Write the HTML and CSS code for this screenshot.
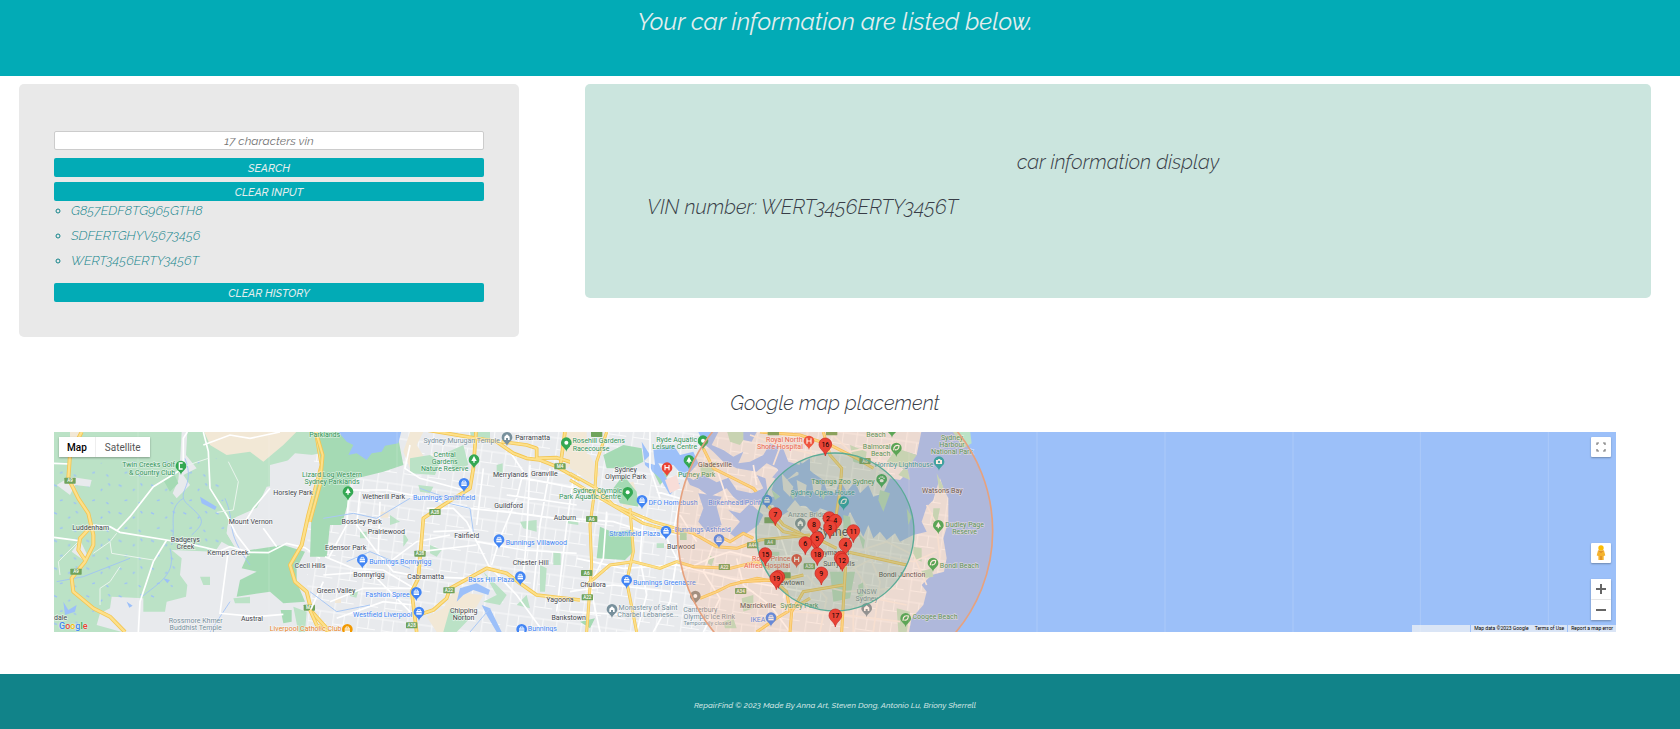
FILE: index.html
```html
<!DOCTYPE html>
<html lang="en">
<head>
<meta charset="utf-8">
<title>RepairFind</title>
<link rel="stylesheet" href="styles.css">
</head>
<body>
<header class="hero"><h1 class="hero-title">Your car information are listed below.</h1></header>
<main>
<div class="panels">
  <section class="search-panel">
    <form class="search-form">
      <input class="vin-input" type="text" aria-label="VIN" placeholder="17 characters vin">
      <button class="btn" type="button">SEARCH</button>
      <button class="btn" type="reset">CLEAR INPUT</button>
    </form>
    <ul class="history">
      <li>G857EDF8TG965GTH8</li>
      <li>SDFERTGHYV5673456</li>
      <li>WERT3456ERTY3456T</li>
    </ul>
    <button class="btn" type="button">CLEAR HISTORY</button>
  </section>
  <section class="car-panel">
    <h2 class="heading">car information display</h2>
    <p class="vin">VIN number: WERT3456ERTY3456T</p>
  </section>
</div>
<section class="map-section">
  <h2 class="heading">Google map placement</h2>
  <div class="map">
    <svg class="map-canvas" viewBox="0 0 4686 600" preserveAspectRatio="xMidYMid slice" role="img" aria-label="Map of Sydney">
      <defs>
        <g id="drop"><path fill="currentColor" d="M0 0C-2-13-16-14-16-27A16 16 0 0 1 16-27C16-14 2-13 0 0Z"/></g>
        <g id="dot"><use href="#drop"/><circle cy="-27" r="6" fill="#fff"/></g>
        <g id="bag"><use href="#drop"/><path d="M-8-30H8V-19H-8Z" fill="#fff"/><path d="M-4-30V-34H4V-30" fill="none" stroke="#fff" stroke-width="2.5"/><path d="M-8-25H8" stroke="currentColor" stroke-width="2"/></g>
        <g id="tree"><use href="#drop"/><path d="M0-38L8-23H2V-18H-2V-23H-8Z" fill="#fff"/></g>
        <g id="hosp"><use href="#drop"/><path d="M-6-35V-19M6-35V-19M-6-27H6" stroke="#fff" stroke-width="3.5"/></g>
        <g id="arch"><use href="#drop"/><path d="M-8-19V-29L0-36L8-29V-19H3V-25H-3V-19Z" fill="#fff"/></g>
        <g id="cam"><use href="#drop"/><path d="M-9-32H-4L-2-35H3L5-32H9V-20H-9Z" fill="#fff"/><circle cy="-26" r="3.5" fill="currentColor"/></g>
        <g id="leaf"><use href="#drop"/><path d="M-8-20C-8-34 0-36 8-34C8-24 2-20-4-22" fill="none" stroke="#fff" stroke-width="3.5"/></g>
        <g id="paw"><use href="#drop"/><ellipse cy="-23" rx="6" ry="5" fill="#fff"/><circle cx="-7" cy="-30" r="2.5" fill="#fff"/><circle cx="-2" cy="-34" r="2.5" fill="#fff"/><circle cx="3" cy="-34" r="2.5" fill="#fff"/><circle cx="7" cy="-30" r="2.5" fill="#fff"/></g>
        <g id="golf"><use href="#drop"/><path d="M5-36H-5V-18H5" fill="none" stroke="#fff" stroke-width="4"/></g>
        <g id="pin"><path d="M0 0C-2-15-19-20-19-35A19 19 0 0 1 19-35C19-20 2-15 0 0Z" fill="#ea4335" stroke="#c5221f" stroke-width="2"/></g>
        <g id="shield"><rect x="-17" y="-9" width="34" height="18" rx="2" fill="#6fa35c"/></g>
        <pattern id="ponds" width="97" height="83" patternUnits="userSpaceOnUse"><path d="M12 14l9 4M55 31l5-5M78 9l5 7M30 61l8-2M72 66l6 5" stroke="#9cc0f9" stroke-width="4"/></pattern>
        <pattern id="blocks" width="74" height="68" patternUnits="userSpaceOnUse" patternTransform="rotate(8)"><path d="M0 12H74M20 0V68M20 46H74M52 12V46" fill="none" stroke="#fff" stroke-width="3" opacity=".75"/></pattern>
      </defs>

      <rect width="4686" height="600" fill="#e8eaed"/>
      <rect x="760" width="2160" height="600" fill="url(#blocks)"/>

      <!-- western farmland -->
      <g transform="translate(-12 -21)">
        <path fill="#bbe2c6" d="M0 0H830V80L740 100L660 120V185L640 240L560 275L535 290L530 325L560 375L515 350L495 380L365 375L395 400L390 450L412 480L408 515L350 530L345 560L280 560V520L185 515L180 550L150 565L140 600L230 625H0Z"/>
        <path fill="url(#ponds)" d="M0 120L500 100L530 290L500 370H365L390 450L340 530L180 515L90 600H0Z"/>
        <path fill="#e8eaed" d="M735 85L790 90L800 200L770 290L745 310L750 350L700 360L610 380L560 375L530 325L535 290L620 250L650 185L690 180L700 120Z"/>
        <path fill="#f2e8d6" d="M60 15H100L95 30L60 50ZM460 15H745L700 60L640 110L600 80L530 90L480 60Z"/>
        <path fill="#e8eaed" d="M395 21H412L408 90L440 130L400 150L420 180L380 220L368 205L385 165L390 110ZM20 180L60 155L125 165L120 185L75 180L60 210ZM65 380L90 345L112 390L100 405Z"/>
        <path fill="#a5dab4" d="M600 375L700 360L765 380L740 430V470L765 530L700 535L660 500L560 515L570 465L620 440L575 430ZM340 165L370 140L385 175L360 200ZM692 555H725V590L700 595Z"/>
        <path fill="#bbe2c6" d="M730 545L770 560L765 621H745ZM450 455H480V480H460ZM550 520L600 515V535H555Z"/>
        <path fill="none" stroke="#9cc0f9" stroke-width="3" opacity=".8" d="M405 100C440 190 370 200 415 240S470 290 425 330M365 360C380 300 350 250 400 220M270 520C330 470 380 450 360 370M525 220C560 300 520 310 600 420M20 470L100 455L240 400M540 530L480 621"/>
        <path fill="#9cc0f9" d="M450 215L500 245L495 255L455 235ZM340 460l20 5-8 10zM40 530l15 25 25-15-5 20-30 10zM230 530l18 12-10 6z"/>
        <path fill="none" stroke="#fff" stroke-width="5" d="M12 337L85 347M125 300L180 305L210 322L350 345L440 362L510 378L540 365L600 382L655 383L710 355L765 368L810 400M200 318L240 275L310 185L400 130V40L412 21M460 21L475 80L480 190L530 270L560 330L600 382M350 345L310 410L270 530L265 621M535 375L510 565L620 575L700 568M640 310L680 365M12 115L60 117M460 60L540 30L600 40L690 21M660 190L610 250L580 300"/>
        <path fill="none" stroke="#eaf5ed" stroke-width="3" d="M400 125L475 100M535 110L565 170L550 255L500 262M130 385L180 350L200 325M180 350L185 385L310 405M210 425L180 470L150 490V540M90 345L25 410L30 450"/>
        <g fill="none" stroke-linejoin="round"><path stroke="#f3c653" stroke-width="12" d="M95 21L80 50L60 90L55 160L85 220L115 265L130 330V360L105 410L65 460L70 500L130 550L180 575L225 621M118 310L90 340L85 375L105 405M798 21L815 120L775 270L755 360L720 420L735 470L770 500L785 560L830 610"/><path stroke="#fde08a" stroke-width="7" d="M95 21L80 50L60 90L55 160L85 220L115 265L130 330V360L105 410L65 460L70 500L130 550L180 575L225 621M118 310L90 340L85 375L105 405M798 21L815 120L775 270L755 360L720 420L735 470L770 500L785 560L830 610"/></g>
        <use href="#shield" x="60" y="167"/><use href="#shield" x="78" y="440"/><use href="#shield" x="778" y="548"/>
        <g class="route"><text x="60" y="172">A9</text><text x="78" y="445">A9</text><text x="778" y="553">M7</text></g>
        <use href="#golf" x="393" y="150" color="#34a853"/>
      </g>

      <!-- western suburbs -->
      <g transform="translate(768 -21)">
        <path fill="#a5dab4" d="M15 15H260L280 120L220 140L120 165L115 230L95 300H60L50 395H0L5 250L35 120Z"/>
        <path fill="#f2e8d6" d="M300 21H340L320 60L345 100L300 130L280 80ZM350 575L400 550L430 500L520 510L500 545L440 590L430 621H380ZM755 21H830V90L770 130ZM210 260h25v18h-25zM75 520h18v14H75z"/>
        <path fill="#9cc0f9" d="M80 15H275L265 55L225 62L215 80L185 85L170 105L140 85L115 90L130 60L110 50ZM440 530L450 490L500 475L540 495L535 510L490 495L460 510ZM515 540L540 550L575 621H560L530 570Z"/>
        <path fill="#bbe2c6" d="M300 100L360 90L390 110L375 150L300 145ZM415 80L460 60L475 120L430 140ZM325 180L370 185L360 205L330 200ZM240 270L270 290L240 300ZM360 360L395 375L380 395L360 385ZM520 440L590 510L570 540L520 530L560 510ZM620 540L650 510L660 550ZM630 290L680 285V320L640 310ZM690 420L710 430L705 500L690 500ZM420 550L480 580L440 621H400ZM280 320l15 25-15 20zM730 380h22v40h-22zM560 120l18-5v35h-18zM770 270l35 10v20l-35-5zM480 21h60v20h-55zM150 320h20v20h-20zM120 490l25 8-6 20-19-5z"/>
        <g fill="none" stroke="#fff" stroke-width="5"><path d="M100 195L230 195L330 215L480 250L600 262L810 290M55 400L110 300L115 225M150 200L140 300L200 380L250 440L330 455L480 460L560 470M210 230L205 380M45 395L130 430L220 435L330 500M300 60L285 130L330 160L460 195M40 450L180 440L300 560M60 530L160 490L330 490M80 580L220 530L310 540M350 250L430 250L470 290L500 350L540 430M500 350L640 375L800 385M520 130L500 300M600 80L640 140L620 220L570 340L545 420M660 120L650 340L640 450M720 130L690 300L670 500M790 160L770 300L740 560M540 425L620 510L700 621M330 380L500 360M240 410L320 350L420 330M40 470L0 560M370 320L490 315M570 145L800 190M590 210L800 240"/></g>
        <path fill="none" stroke="#a9c8f5" stroke-width="3" d="M110 410L180 380L300 430M395 230L480 250L490 320M40 280L130 265L200 280L300 220M0 500L80 560L180 540M330 190L400 215M540 550L480 621"/>
        <g fill="none" stroke-linejoin="round"><path stroke="#f3c653" stroke-width="11" d="M18 21L38 90L30 180L0 290M320 621L305 500L325 460L340 280L400 240L480 190L490 130L498 21M325 570L370 555L410 520L420 490L530 430L590 445L630 475L680 510L810 525M350 15L560 50L610 85L650 100L690 105L740 125L810 165M575 50L650 60L680 70V100L740 98L810 120M765 21L750 130M0 555L20 600L60 621"/><path stroke="#fde08a" stroke-width="6" d="M18 21L38 90L30 180L0 290M320 621L305 500L325 460L340 280L400 240L480 190L490 130L498 21M325 570L370 555L410 520L420 490L530 430L590 445L630 475L680 510L810 525M350 15L560 50L610 85L650 100L690 105L740 125L810 165M575 50L650 60L680 70V100L740 98L810 120M765 21L750 130M0 555L20 600L60 621"/></g>
        <use href="#shield" x="375" y="261"/><use href="#shield" x="330" y="386"/><use href="#shield" x="417" y="496"/><use href="#shield" x="305" y="601"/><use href="#shield" x="750" y="124"/>
        <g class="route"><text x="375" y="266">A28</text><text x="330" y="391">A28</text><text x="417" y="501">A22</text><text x="305" y="606">A28</text><text x="750" y="129">M4</text></g>
        <use href="#arch" x="591" y="64" color="#78909c"/>
        <g color="#34a853"><use href="#tree" x="492" y="131"/><use href="#tree" x="114" y="227"/><use href="#dot" x="769" y="80"/></g>
        <g color="#4285f4"><use href="#bag" x="462" y="202"/><use href="#bag" x="567" y="371"/><use href="#bag" x="157" y="431"/><use href="#bag" x="631" y="482"/><use href="#bag" x="319" y="529"/><use href="#bag" x="327" y="588"/><use href="#bag" x="635" y="640"/></g>
        <use href="#bag" x="112" y="640" color="#f29900"/>
      </g>

      <!-- inner west -->
      <g transform="translate(1548 -21)">
        <path fill="#f2e8d6" d="M0 60L60 90L90 150L60 170L0 130ZM140 180L190 170L210 240L160 245Z"/>
        <path fill="#a5dab4" d="M90 305L125 320L190 315V380L165 405L80 400ZM100 90L160 60L215 70L220 110L180 130H110ZM130 190L160 150L200 200L205 245L150 235ZM250 140L300 145L270 180ZM330 320h20v25h-20zM30 590L75 580L60 610Z"/>
        <path fill="#bbe2c6" d="M470 15H540L510 60L480 50ZM390 120L440 110L430 150L395 160ZM515 520L550 510V550L520 560ZM260 355h22v14h-22zM415 390l18 8-8 25-12-8zM600 380h28v16h-28zM460 590l30-10 10 30h-35z"/>
        <path fill="#9cc0f9" d="M215 50L240 90L220 110L255 120L250 75L310 60L330 90L370 80L385 115L345 160L310 120L265 115L295 170L330 175L300 210L270 160L225 120ZM345 150L370 165L400 150L440 172L475 158L500 195L545 205L585 190L625 225L690 205L740 220V250L690 240L640 255L600 235L560 225L520 240L490 215L470 190L420 215L385 190L360 180ZM385 205L455 215L440 245L455 300L410 320L385 290L400 250ZM475 255L510 265L540 235L580 270L565 300L530 325L500 340L480 325L510 290ZM385 21H445L425 60L460 75L490 95L520 80L505 115L540 110L580 90L600 55L640 72L655 110L690 120L720 100V160L680 140L650 165L620 130L590 115L560 140L500 130L460 110L430 80L400 55ZM520 21H560L545 50L520 45Z"/>
        <path fill="#f8ddd8" d="M285 165L320 150L330 190L300 205Z"/>
        <g fill="none" stroke="#fff" stroke-width="5"><path d="M0 280L130 290L290 340L320 400L300 530L250 621M20 400L160 430L320 420L480 460L700 500M220 270L210 400L230 510L200 621M110 260L100 400L60 480L90 621M0 500L130 480L300 500M330 440L420 400L480 380L560 400L700 390M430 360L400 440L450 520L400 621M500 400L520 480L600 540L660 621M260 200L330 220L310 320M440 130L480 250M550 120L560 180M620 300L660 420L640 520M0 560L180 570M240 21V130L270 220M330 270L380 350"/></g>
        <g fill="none" stroke-linejoin="round"><path stroke="#f3c653" stroke-width="9" d="M0 145L80 190L130 240L250 290L370 325L440 365L500 370L570 345L720 330M0 165L100 225L220 295L330 325M110 21L80 110L75 190L60 300L65 420L50 621M180 250L190 380L170 470L200 621M50 480L120 420L190 410L270 430L320 410L370 425L480 430L560 410L600 430M400 70L430 130L500 165L550 190L600 250L640 300L700 330M440 330L480 350L520 325L550 340M390 520L440 500L480 480L560 460L620 470L700 450M560 621L620 580L720 520"/><path stroke="#fde08a" stroke-width="5" d="M0 145L80 190L130 240L250 290L370 325L440 365L500 370L570 345L720 330M0 165L100 225L220 295L330 325M110 21L80 110L75 190L60 300L65 420L50 621M180 250L190 380L170 470L200 621M50 480L120 420L190 410L270 430L320 410L370 425L480 430L560 410L600 430M400 70L430 130L500 165L550 190L600 250L640 300L700 330M440 330L480 350L520 325L550 340M390 520L440 500L480 480L560 460L620 470L700 450M560 621L620 580L720 520"/></g>
        <use href="#shield" x="65" y="282"/><use href="#shield" x="50" y="444"/><use href="#shield" x="52" y="517"/><use href="#shield" x="463" y="426"/><use href="#shield" x="512" y="498"/><use href="#shield" x="548" y="361"/><use href="#shield" x="600" y="351"/><use href="#shield" x="80" y="27"/>
        <g class="route"><text x="65" y="287">A6</text><text x="50" y="449">A6</text><text x="52" y="522">A22</text><text x="463" y="431">A22</text><text x="512" y="503">A34</text><text x="548" y="366">A44</text><text x="600" y="356">A4</text></g>
        <g color="#34a853"><use href="#dot" x="399" y="74"/><use href="#tree" x="357" y="133"/><use href="#dot" x="173" y="229"/></g>
        <use href="#hosp" x="291" y="155" color="#ea4335"/>
        <g color="#4285f4"><use href="#bag" x="216" y="253"/><use href="#bag" x="288" y="345"/><use href="#bag" x="447" y="370"/><use href="#bag" x="170" y="492"/></g>
        <use href="#arch" x="126" y="580" color="#78909c"/><use href="#dot" x="376" y="540" color="#8d8d86"/>
      </g>

      <!-- harbour and coast -->
      <g transform="translate(2058 -21)">
        <path fill="#9cc0f9" d="M180 110L220 145L250 165L260 195L285 205L300 165L320 200L345 170L360 205L385 180L400 215L430 205L450 160L480 165L505 140L470 120L500 80L530 90L545 15H2640V630H505L515 580L550 540L560 500L545 480L575 450L612 440L620 400L610 340L625 290V220L610 190L600 160L590 190L580 225L560 245L545 290L560 320L520 330L500 340L480 350L465 325L440 345L420 320L400 340L385 300L370 335L345 290L330 260L315 295L300 275L285 300L270 260L240 250L225 270L195 240L160 250L120 275L100 240L60 240L30 210L70 190L50 150L90 165L120 130L140 165L175 150Z"/>
        <path fill="#e8eaed" d="M75 150L105 160L95 195L120 215L85 215ZM125 145L160 185L150 215L130 195ZM170 165L200 180L195 215L175 205ZM215 160L245 180L240 215L220 200ZM140 255L165 225L185 250L170 280Z"/>
        <path fill="#bbe2c6" d="M95 195L120 215L105 225ZM150 205L165 200L160 225ZM240 195L260 200L250 225ZM635 15H690L695 55L670 70ZM330 60L380 80L375 120L340 110ZM470 70L530 90L500 135L440 110ZM420 195L450 205L430 260L415 225ZM590 145L610 185L600 210ZM500 120L475 150L510 165ZM270 440L345 440L330 520L280 530ZM520 365L545 370V410L520 400ZM355 325L375 345L370 375ZM540 440L575 430L580 455L550 460ZM470 550L510 560L500 621H475ZM310 270L330 275L335 320L310 320ZM500 250L515 275L505 300ZM580 250l20 0-8 40-14 0zM355 480l15-8v40l-15 8z"/>
        <g fill="none" stroke="#f6f1ec" stroke-width="5"><path d="M320 440L420 390L520 410L590 380M340 420L400 520L500 540M350 380L440 350L520 390L560 480M200 450L260 520L240 621M50 530L160 560L320 570L480 590M380 370L420 470L400 621M230 480L320 500L470 490M340 540V621M30 30L150 70L230 90M270 21L330 80L480 50M200 21L220 110M130 40L100 120M560 240L590 300L600 400M140 400L250 390L280 430M430 60L410 150"/></g>
        <g fill="none"><path stroke="#f3c653" stroke-width="9" d="M250 21L270 90L305 130L300 200L285 290L320 370L315 450L305 621M150 621L155 560L190 500L310 480M100 290L130 320L230 340L290 370M60 21L180 30L270 60L350 100L400 130M320 380L500 420M0 470L100 465L140 500L150 560"/><path stroke="#fde08a" stroke-width="5" d="M250 21L270 90L305 130L300 200L285 290L320 370L315 450L305 621M150 621L155 560L190 500L310 480M100 290L130 320L230 340L290 370M60 21L180 30L270 60L350 100L400 130M320 380L500 420M0 470L100 465L140 500L150 560"/></g>
        <use href="#shield" x="375" y="108"/><use href="#shield" x="90" y="286"/><use href="#shield" x="208" y="424"/><use href="#shield" x="135" y="451"/><use href="#shield" x="100" y="22"/><use href="#shield" x="275" y="22"/>
        <g class="route"><text x="375" y="113">A8</text><text x="208" y="429">A36</text></g>
        <g color="#ea4335"><use href="#hosp" x="207" y="75"/><use href="#hosp" x="170" y="430"/></g>
        <g color="#34a853"><use href="#leaf" x="469" y="96"/><use href="#paw" x="425" y="190"/><use href="#tree" x="595" y="328"/><use href="#leaf" x="579" y="441"/><use href="#leaf" x="497" y="607"/><use href="#dot" x="456" y="38"/></g>
        <g color="#12a4af"><use href="#cam" x="597" y="137"/><use href="#leaf" x="311" y="257"/></g>
        <use href="#arch" x="181" y="322" color="#78909c"/><use href="#arch" x="380" y="577" color="#78909c"/>
        <g color="#4285f4"><use href="#bag" x="93" y="605"/><use href="#bag" x="81" y="252"/></g>
      </g>
      <path d="M252 0V600M645 0V600M1029 0V600M1797 0V600M2565 0V600M2949 0V600M3333 0V600M3717 0V600M4099 0V600M4483 0V600" stroke="#fff" stroke-width="2" opacity=".25"/>

      <g class="town">
        <text x="110" y="293">Luddenham</text><text x="394" y="330">Badgerys</text><text x="394" y="351">Creek</text><text x="522" y="370">Kemps Creek</text><text x="590" y="275">Mount Vernon</text><text x="717" y="189">Horsley Park</text><text x="768" y="408">Cecil Hills</text><text x="594" y="566">Austral</text><text x="20" y="565">dale</text>
        <text x="989" y="202">Wetherill Park</text><text x="923" y="276">Bossley Park</text><text x="997" y="306">Prairiewood</text><text x="875" y="354">Edensor Park</text><text x="945" y="436">Bonnyrigg</text><text x="846" y="482">Green Valley</text><text x="1115" y="441">Cabramatta</text><text x="1229" y="543">Chipping</text><text x="1229" y="564">Norton</text><text x="1238" y="318">Fairfield</text><text x="1364" y="229">Guildford</text><text x="1369" y="135">Merrylands</text><text x="1471" y="132">Granville</text><text x="1436" y="24">Parramatta</text><text x="1430" y="400">Chester Hill</text><text x="1518" y="510">Yagoona</text><text x="1533" y="264">Auburn</text><text x="1544" y="565">Bankstown</text>
        <text x="1715" y="121">Sydney</text><text x="1715" y="142">Olympic Park</text><text x="1983" y="105">Gladesville</text><text x="1881" y="352">Burwood</text><text x="1617" y="464">Chullora</text><text x="2112" y="527">Marrickville</text><text x="2207" y="460">Newtown</text><text x="2335" y="369">Haymarket</text><text x="2355" y="401">Surry Hills</text><text x="2544" y="434">Bondi Junction</text><text x="2665" y="183">Watsons Bay</text>
        <text class="city" x="2342" y="312">Sydney</text>
      </g>
      <g class="poi green">
        <text x="284" y="106">Twin Creeks Golf</text><text x="294" y="128">&amp; Country Club</text><text x="834" y="134">Lizard Log Western</text><text x="834" y="155">Sydney Parklands</text><text x="812" y="14">Parklands</text><text x="1172" y="76">Central</text><text x="1172" y="97">Gardens</text><text x="1172" y="118">Nature Reserve</text><text x="1634" y="34">Rosehill Gardens</text><text x="1611" y="56">Racecourse</text><text x="1868" y="30">Ryde Aquatic</text><text x="1862" y="51">Leisure Centre</text><text x="1928" y="135">Putney Park</text><text x="1631" y="182">Sydney Olympic</text><text x="1608" y="202">Park Aquatic Centre</text><text x="2468" y="51">Balmoral</text><text x="2480" y="72">Beach</text><text x="2466" y="15">Beach</text><text x="2367" y="156">Taronga Zoo Sydney</text><text x="2694" y="23">Sydney</text><text x="2694" y="44">Harbour</text><text x="2694" y="65">National Park</text><text x="2732" y="284">Dudley Page</text><text x="2732" y="305">Reserve</text><text x="2716" y="408">Bondi Beach</text><text x="2643" y="560">Coogee Beach</text><text x="2236" y="528">Sydney Park</text>
      </g>
      <g class="poi blue">
        <text x="1170" y="205">Bunnings Smithfield</text><text x="1447" y="338">Bunnings Villawood</text><text x="1039" y="396">Bunnings Bonnyrigg</text><text x="1312" y="450">Bass Hill Plaza</text><text x="1001" y="495">Fashion Spree</text><text x="986" y="554">Westfield Liverpool</text><text x="1465" y="597">Bunnings</text><text x="1857" y="219">DFO Homebush</text><text x="2042" y="219">Birkenhead Point</text><text x="1742" y="311">Strathfield Plaza</text><text x="1946" y="300">Bunnings Ashfield</text><text x="1831" y="459">Bunnings Greenacre</text><text x="2112" y="570">IKEA</text>
      </g>
      <g class="poi slate">
        <text x="425" y="573">Rossmore Khmer</text><text x="425" y="594">Buddhist Temple</text><text x="1223" y="32">Sydney Murugan Temple</text><text x="1782" y="535">Monastery of Saint</text><text x="1782" y="556">Charbel Lebanese...</text><text x="1939" y="541">Canterbury</text><text x="1966" y="562">Olympic Ice Rink</text><text class="note" x="1960" y="580">Temporarily closed</text><text x="2264" y="255">Anzac Bridge</text><text x="2438" y="487">UNSW</text><text x="2438" y="508">Sydney</text>
      </g>
      <g class="poi red"><text x="2191" y="30">Royal North</text><text x="2178" y="51">Shore Hospital</text><text x="2152" y="386">Royal Prince</text><text x="2140" y="407">Alfred Hospital</text></g>
      <g class="poi teal"><text x="2550" y="105">Hornby Lighthouse</text><text x="2306" y="189">Sydney Opera House</text></g>
      <g class="poi amber"><text x="755" y="596">Liverpool Catholic Club</text></g>

      <circle cx="2343" cy="297" r="473" fill="#ff9966" fill-opacity=".2" stroke="#e6a27f" stroke-width="5"/>
      <circle cx="2343" cy="300" r="237" fill="#228877" fill-opacity=".18" stroke="#5aab96" stroke-width="4"/>

      <g class="pins" transform="translate(2058 -21)">
        <use href="#pin" x="256" y="93"/><text x="256" y="66">16</text>
        <use href="#pin" x="106" y="302"/><text x="106" y="275">7</text>
        <use href="#pin" x="268" y="314"/><text x="264" y="288">2</text>
        <use href="#pin" x="286" y="322"/><text x="286" y="295">4</text>
        <use href="#pin" x="222" y="333"/><text x="222" y="306">8</text>
        <use href="#pin" x="270" y="341"/><text x="270" y="314">3</text>
        <use href="#pin" x="340" y="353"/><text x="340" y="326">11</text>
        <use href="#pin" x="227" y="380"/><use href="#pin" x="232" y="374"/><text x="231" y="348">5</text>
        <use href="#pin" x="196" y="389"/><text x="196" y="362">6</text>
        <use href="#pin" x="316" y="393"/><text x="316" y="366">4</text>
        <use href="#pin" x="76" y="422"/><text x="76" y="395">15</text>
        <use href="#pin" x="232" y="422"/><text x="232" y="395">18</text>
        <use href="#pin" x="302" y="433"/><use href="#pin" x="307" y="439"/><text x="306" y="413">12</text>
        <use href="#pin" x="244" y="480"/><text x="244" y="453">9</text>
        <use href="#pin" x="115" y="490"/><use href="#pin" x="109" y="494"/><text x="109" y="467">19</text>
        <use href="#pin" x="286" y="606"/><text x="286" y="579">17</text>
      </g>
    </svg>
    <div class="map-types"><button type="button" class="selected">Map</button><button type="button">Satellite</button></div>
    <div class="google" aria-label="Google"><span class="b">G</span><span class="r">o</span><span class="y">o</span><span class="b">g</span><span class="g">l</span><span class="r">e</span></div>
    <button class="ctrl fullscreen" type="button" aria-label="Toggle fullscreen"><svg width="10" height="10" viewBox="0 0 10 10"><path d="M1 3V1H3M7 1H9V3M9 7V9H7M3 9H1V7" fill="none" stroke="#777" stroke-width="1.2"/></svg></button>
    <div class="side-controls">
      <button class="ctrl" type="button" aria-label="Street View"><svg width="10" height="16" viewBox="0 0 10 16"><circle cx="5" cy="3" r="2.7" fill="#fbbc04"/><path d="M2 5.5H8L9.3 10.5L7.7 11V15H2.4V11L.7 10.5Z" fill="#f5b22d"/><path d="M3 5.5L5 7.5L7 5.5M5 11V15" fill="none" stroke="#d0782a"/></svg></button>
      <div class="zoom">
        <button class="ctrl" type="button" aria-label="Zoom in"><svg width="10" height="10" viewBox="0 0 10 10"><path d="M0 5H10M5 0V10" stroke="#666" stroke-width="2"/></svg></button>
        <button class="ctrl" type="button" aria-label="Zoom out"><svg width="10" height="10" viewBox="0 0 10 10"><path d="M0 5H10" stroke="#666" stroke-width="2"/></svg></button>
      </div>
    </div>
    <div class="attribution"><span class="keys"></span><span class="credit">Map data ©2023 Google</span><a href="#terms">Terms of Use</a><a class="report" href="#report">Report a map error</a></div>
  </div>
</section>
</main>
<footer class="footer">RepairFind © 2023 Made By Anna Art, Steven Dong, Antonio Lu, Briony Sherrell</footer>
</body>
</html>
```
FILE: styles.css
```css
* { box-sizing: border-box; }
body { margin: 0; min-height: 100vh; display: flex; flex-direction: column; background: #fff; color: #383d47; font-family: Raleway, Lato, sans-serif; font-style: italic; font-weight: 300; }
button, input { font: inherit; }
.hero { padding: 6px 10px 38px 0; background: #02abb6; color: #e4eeee; text-align: center; }
.hero-title { margin: 0; font-size: 24px; line-height: 32px; font-weight: 400; }
.panels { display: grid; grid-template-columns: 500fr 1066fr; gap: 66px; align-items: start; padding: 8px 29px 0 19px; }
.search-panel { padding: 47px 35px 35px; border-radius: 5px; background: #e9e9e9; }
.search-form { display: flex; flex-direction: column; gap: 5px; }
.vin-input { width: 100%; height: 19px; margin-bottom: 3px; padding: 0; border: 1px solid #ccc; border-radius: 2px; background: #fff; font-size: 12px; font-weight: 400; text-align: center; }
.vin-input::placeholder { color: #757575; opacity: 1; }
.btn { display: block; width: 100%; height: 19px; padding: 2px 0 0; border: 0; border-radius: 2px; background: #02abb6; color: #e4eeee; font-size: 11px; font-weight: 500; line-height: 17px; }
.history { margin: 0 0 13px; padding: 0 0 0 17px; list-style: circle; color: #118389; font-size: 13px; line-height: 19px; }
.history li { margin-bottom: 6px; }
.car-panel { padding: 64px 62px 77px; border-radius: 5px; background: #cbe5de; }
.heading { margin: 0; font-size: 20px; line-height: 28px; font-weight: 300; text-align: center; }
.vin { margin: 17px 0 0; font-size: 20px; line-height: 28px; }
.map-section { padding: 52px 64px 42px 54px; }
.map { position: relative; height: 200px; margin-top: 15px; overflow: hidden; font-family: Roboto, sans-serif; font-style: normal; font-weight: 400; }
.map-canvas { display: block; width: 100%; height: 100%; }
.map-canvas text { text-anchor: middle; }
.town { fill: #44474d; font-size: 21px; stroke: #fff; stroke-opacity: .6; stroke-width: 4px; paint-order: stroke; }
.town .city { font-size: 36px; }
.poi { font-size: 21px; stroke: #fff; stroke-opacity: .5; stroke-width: 4px; paint-order: stroke; }
.poi .note { font-size: 17px; }
.route { fill: #fff; font-size: 14px; font-weight: 500; }
.green { fill: #34935a; }
.blue { fill: #4285f4; }
.slate { fill: #78909c; }
.red { fill: #e4574c; }
.teal { fill: #1796a3; }
.amber { fill: #e8862e; }
.pins text { fill: #000; font-size: 21px; }
.map-types { position: absolute; top: 5px; left: 5px; display: flex; gap: 1px; box-shadow: 0 1px 2px rgba(0, 0, 0, .3); background: #eee; }
.map-types button { height: 20px; padding: 0 9px; border: 0; background: #fff; color: #565656; font-size: 10px; font-weight: 400; }
.map-types .selected { padding: 0 8px; color: #000; font-weight: 500; }
.google { position: absolute; left: 5px; bottom: 0; font-size: 9px; line-height: 12px; font-weight: 500; text-shadow: 0 0 2px #fff; }
.b { color: #4285f4; } .r { color: #ea4335; } .y { color: #fbbc04; } .g { color: #34a853; }
.ctrl { display: grid; place-items: center; width: 20px; height: 20px; padding: 0; border: 0; border-radius: 1px; background: #fff; box-shadow: 0 1px 2px rgba(0, 0, 0, .3); }
.fullscreen { position: absolute; top: 5px; right: 5px; }
.side-controls { position: absolute; right: 5px; bottom: 12px; display: flex; flex-direction: column; gap: 16px; }
.zoom { background: #fff; box-shadow: 0 1px 2px rgba(0, 0, 0, .3); }
.zoom .ctrl { box-shadow: none; }
.zoom .ctrl + .ctrl { height: 21px; border-top: 1px solid #e6e6e6; }
.attribution { position: absolute; right: 0; bottom: 0; display: flex; color: #000; font-size: 5px; line-height: 7px; }
.attribution > * { padding: 0 3px; background: rgba(245, 245, 245, .7); color: #000; text-decoration: none; }
.attribution .keys { width: 58px; }
.attribution .credit, .attribution .report { margin-left: 1px; }
.footer { flex: 1; padding: 25px 10px 18px 0; background: #118389; color: #cfe3e3; font-size: 8px; line-height: 12px; font-weight: 500; text-align: center; }
```
